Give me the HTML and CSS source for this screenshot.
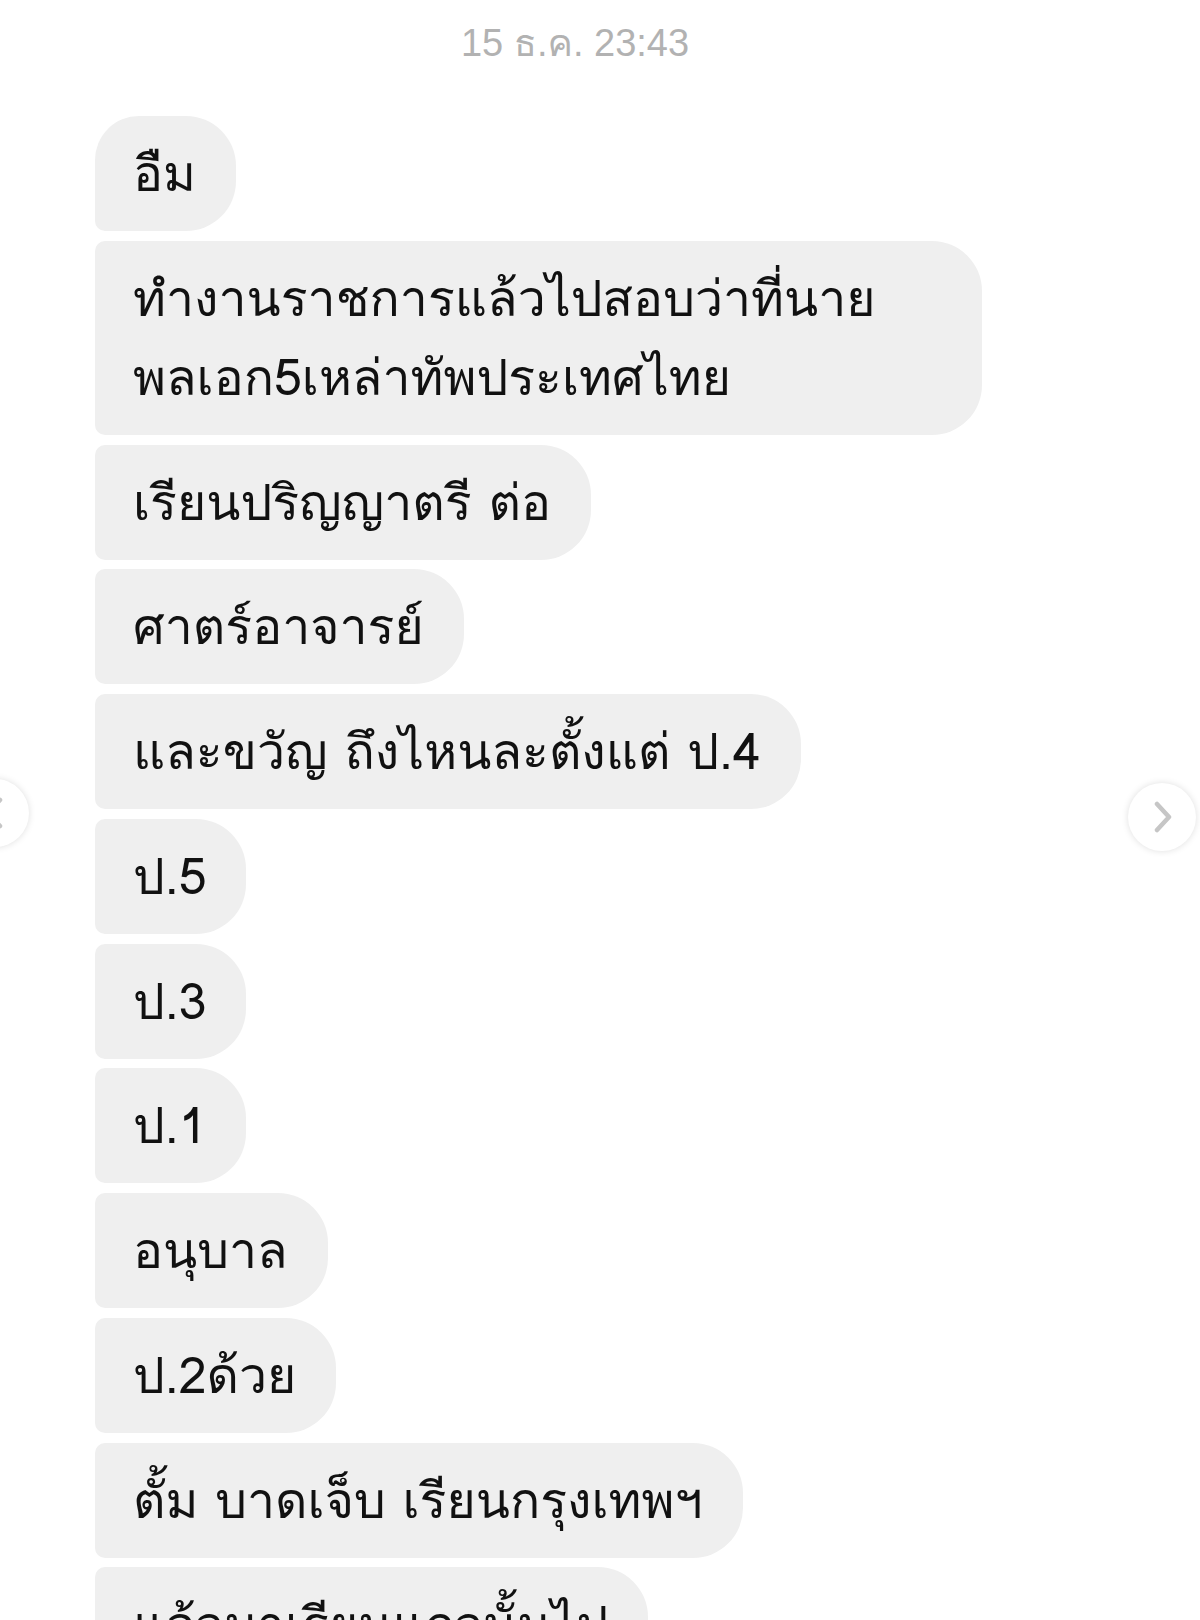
FILE: index.html
```html
<!DOCTYPE html>
<html lang="th">
<head>
<meta charset="utf-8">
<title>แชท</title>
<link rel="stylesheet" href="styles.css">
</head>
<body>
<main class="thread">
  <div class="stamp">15 ธ.ค. 23:43</div>
  <div class="messages">
    <div class="bubble first">อืม</div>
    <div class="bubble wide">ทำงานราชการแล้วไปสอบว่าที่นาย<br>พลเอก5เหล่าทัพประเทศไทย</div>
    <div class="bubble">เรียนปริญญาตรี ต่อ</div>
    <div class="bubble">ศาตร์อาจารย์</div>
    <div class="bubble">และขวัญ ถึงไหนละตั้งแต่ ป.4</div>
    <div class="bubble">ป.5</div>
    <div class="bubble">ป.3</div>
    <div class="bubble">ป.1</div>
    <div class="bubble">อนุบาล</div>
    <div class="bubble">ป.2ด้วย</div>
    <div class="bubble">ตั้ม บาดเจ็บ เรียนกรุงเทพฯ</div>
    <div class="bubble">แล้วมาเรียนแถวนั้นไป</div>
  </div>
</main>
<button class="nav nav-prev" aria-label="ก่อนหน้า">
  <svg viewBox="0 0 32 32" width="32" height="32"><path d="M21 3 L9 16 L21 29" fill="none" stroke="#c6c6c6" stroke-width="4.5" stroke-linecap="round" stroke-linejoin="round"/></svg>
</button>
<button class="nav nav-next" aria-label="ถัดไป">
  <svg viewBox="0 0 32 32" width="32" height="32"><path d="M11 3 L23 16 L11 29" fill="none" stroke="#c6c6c6" stroke-width="4.5" stroke-linecap="round" stroke-linejoin="round"/></svg>
</button>
</body>
</html>
```
FILE: styles.css
```css
html, body {
  margin: 0;
  padding: 0;
  background: #ffffff;
}
body {
  width: 1200px;
  height: 1620px;
  overflow: hidden;
  position: relative;
  font-family: "Loma", "Noto Sans Thai Looped", "Noto Sans Thai", "Liberation Sans", sans-serif;
}
.thread {
  margin-left: 95px;
  width: 960px;
  padding-top: 16px;
}
.stamp {
  text-align: center;
  font-family: "Liberation Sans", "Loma", sans-serif;
  font-size: 38px;
  line-height: 54px;
  color: #b2b2b2;
  margin-bottom: 46px;
}
.messages {
  display: flex;
  flex-direction: column;
  align-items: flex-start;
  gap: 9.75px;
}
.bubble {
  box-sizing: border-box;
  background: #efefef;
  color: #111111;
  font-size: 50px;
  line-height: 79px;
  padding: 18px 40px 18px 38px;
  border-radius: 10px 50px 50px 10px;
  white-space: nowrap;
}
.bubble.first {
  border-top-left-radius: 44px;
}
.bubble.wide {
  width: 887px;
}
.nav {
  position: absolute;
  width: 68px;
  height: 68px;
  border-radius: 50%;
  border: none;
  padding: 0;
  background: #ffffff;
  box-shadow: 0 0 7px rgba(0, 0, 0, 0.13);
  display: flex;
  align-items: center;
  justify-content: center;
}
.nav-prev {
  left: -39px;
  top: 779px;
}
.nav-next {
  left: 1128px;
  top: 783px;
}
```
